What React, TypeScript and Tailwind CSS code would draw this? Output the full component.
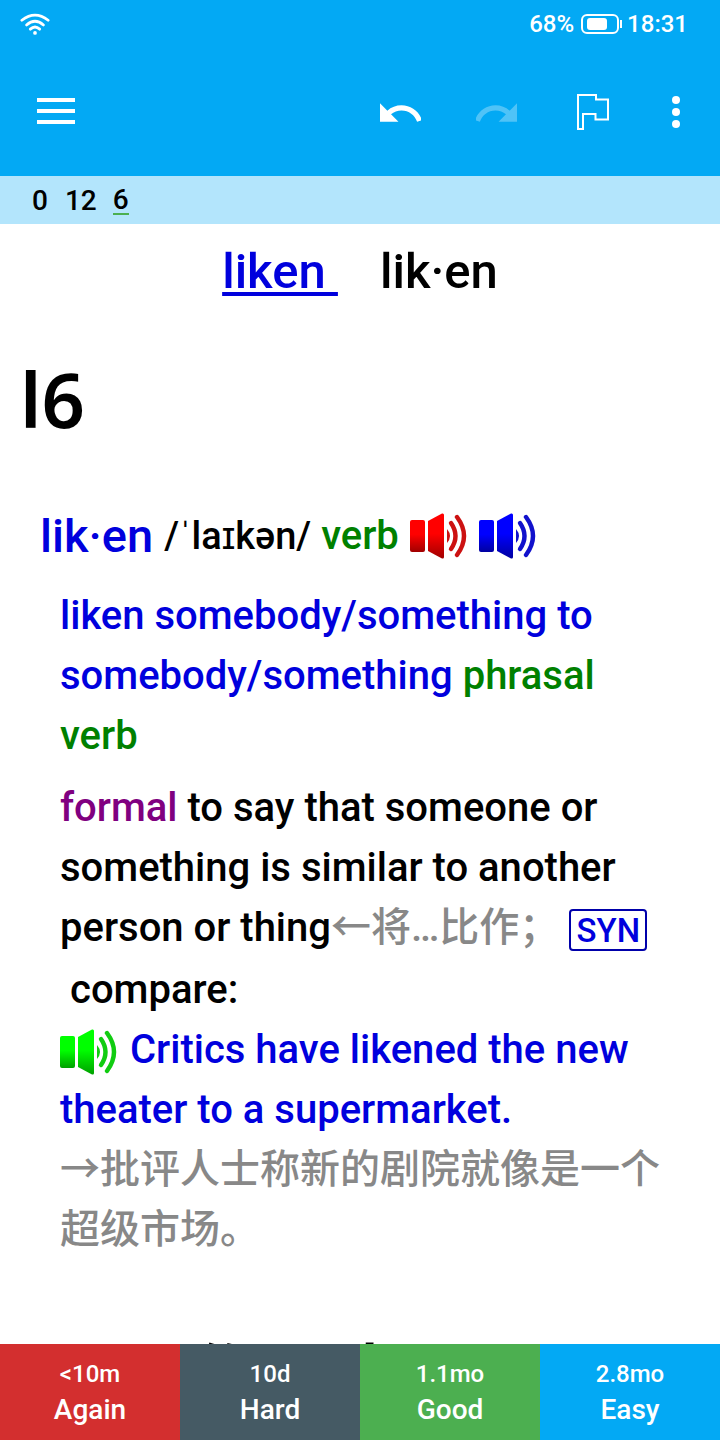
import React from "react";

function Speaker({ light, dark, arc, className }: { light: string; dark: string; arc: string; className?: string }) {
  const id = "g" + light.replace("#", "");
  return (
    <svg viewBox="0 0 58 46" className={className} style={{ filter: "blur(0.7px)" }}>
      <defs>
        <linearGradient id={id} x1="0" y1="0" x2="0" y2="1">
          <stop offset="0" stopColor={light} />
          <stop offset="0.45" stopColor={light} />
          <stop offset="1" stopColor={dark} />
        </linearGradient>
      </defs>
      <rect x="0" y="7" width="15" height="32" rx="2" fill={`url(#${id})`} />
      <path d="M18 8 L32 0.5 Q34 0 34 2 V44 Q34 46 32 45.5 L18 38 Z" fill={`url(#${id})`} />
      <path d="M37 16 Q43 23 37 30 Z" fill={arc} />
      <path d="M41 10 Q50 23 41 36" fill="none" stroke={arc} strokeWidth="4.4" strokeLinecap="round" />
      <path d="M47 4 Q61 23 47 42" fill="none" stroke={arc} strokeWidth="4.4" strokeLinecap="round" />
    </svg>
  );
}

function Btn({ top, label, bg }: { top: string; label: string; bg: string }) {
  return (
    <div className={`flex-1 flex flex-col items-center justify-center pt-[3px] text-white font-medium ${bg}`}>
      <div className="text-[24px] leading-[32px]">{top}</div>
      <div className="text-[28px] leading-[40px]">{label}</div>
    </div>
  );
}

export default function App() {
  return (
    <div className="w-[720px] h-[1440px] flex flex-col overflow-hidden bg-white font-['Roboto','Noto_Sans_CJK_SC',sans-serif] text-black">
      <div className="h-[176px] bg-[#03a9f4] flex flex-col text-white shrink-0">
        <div className="h-[48px] flex items-center justify-between pl-[20px] pr-[32px]">
          <svg viewBox="0 0 32 24" className="w-[30px] h-[24px]" fill="none" stroke="#ffffff" strokeWidth="3" strokeLinecap="round">
            <path d="M2 8 Q16 -3 30 8" />
            <path d="M7 13 Q16 5 25 13" />
            <path d="M11 17.5 Q16 13 21 17.5" />
            <circle cx="16" cy="21.5" r="2" fill="#ffffff" stroke="none" />
          </svg>
          <div className="flex items-center text-[24px] font-medium">
            <span>68%</span>
            <span className="relative ml-[7px] mr-[8px] w-[38px] h-[20px] border-2 border-white rounded-[6px] flex items-center pl-[4px]">
              <span className="w-[20px] h-[12px] bg-white rounded-[3px]" />
              <span className="absolute right-[-5px] top-[4px] w-[2px] h-[8px] bg-white" />
            </span>
            <span>18:31</span>
          </div>
        </div>
        <div className="flex-1 flex items-center pl-[37px] pr-[40px]">
          <div className="w-[38px] -mt-[2px] flex flex-col gap-[7px]">
            <div className="h-[4px] bg-white" />
            <div className="h-[4px] bg-white" />
            <div className="h-[4px] bg-white" />
          </div>
          <div className="flex-1" />
          <svg viewBox="2 7 20 9" className="w-[41px] h-[19px] mr-[55px]">
            <path d="M12.5 8c-2.65 0-5.05.99-6.9 2.6L2 7v9h9l-3.62-3.62c1.39-1.16 3.16-1.88 5.12-1.88 3.54 0 6.55 2.31 7.6 5.5l2.37-.78C21.08 11.03 17.15 8 12.5 8z" fill="#ffffff" />
          </svg>
          <svg viewBox="2 7 20 9" className="w-[41px] h-[19px] mr-[60px]">
            <path d="M18.4 10.6C16.55 8.99 14.15 8 11.5 8c-4.65 0-8.58 3.03-9.96 7.22L3.9 16c1.05-3.19 4.05-5.5 7.6-5.5 1.95 0 3.73.72 5.12 1.88L13 16h9V7l-3.6 3.6z" fill="#ffffff" fillOpacity="0.3" />
          </svg>
          <svg viewBox="0 0 32 36" className="w-[32px] h-[36px] mr-[63px]" fill="none" stroke="#ffffff" strokeWidth="2">
            <path d="M1 35 V1 H19 V5.5 H31 V25.5 H18.5 V20 H6 V35 Z" />
          </svg>
          <div className="flex flex-col gap-[4px]">
            <div className="w-[8px] h-[8px] bg-white rounded-full" />
            <div className="w-[8px] h-[8px] bg-white rounded-full" />
            <div className="w-[8px] h-[8px] bg-white rounded-full" />
          </div>
        </div>
      </div>
      <div className="h-[48px] bg-[#b3e5fc] flex items-center pl-[32px] pt-[1px] text-[28px] font-medium shrink-0">
        <span>0</span>
        <span className="ml-[17px]">12</span>
        <span className="ml-[16px] leading-[27px] border-b-2 border-[#4caf50]">6</span>
      </div>
      <div className="flex-1 overflow-hidden min-h-0">
        <div className="h-[96px] flex items-center justify-center gap-[42px] text-[49px] font-[480]">
          <span className="text-[#0000dd] underline decoration-[4px] underline-offset-[4px] whitespace-pre">liken </span>
          <span>lik·en</span>
        </div>
        <div className="pl-[20px] mt-[24px] h-[110px] text-[76px] leading-[110px] font-['Noto_Sans'] font-semibold">l6</div>
        <div className="pl-[40px] mt-[50px] h-[64px] flex items-center text-[40px] font-[480] whitespace-pre">
          <span className="text-[47px] text-[#0000dd]">lik·en</span>
          <span className="ml-[11px] text-[38px]">/ˈlaɪkən/</span>
          <span className="ml-[10px] text-[#008000]">verb</span>
          <Speaker light="#ff0000" dark="#a00000" arc="#cc1111" className="ml-[11px] w-[58px] h-[46px]" />
          <Speaker light="#0000ff" dark="#0000a0" arc="#1111cc" className="ml-[11px] w-[58px] h-[46px]" />
        </div>
        <div className="pl-[60px] pr-[56px] mt-[18px] text-[40px] leading-[60px] font-[480]">
          <div>
            <span className="text-[#0000dd]">liken somebody/something to somebody/something</span>{" "}
            <span className="text-[#008000]">phrasal verb</span>
          </div>
          <div className="mt-[12px]">
            <span className="text-[#800080]">formal</span> to say that someone or something is similar to another person or thing
            <span className="text-[#888888] font-medium">←将…比作；</span>
            <span className="inline-block ml-[10px] w-[78px] h-[42px] leading-[40px] text-center border-2 border-[#0000aa] rounded-[4px] text-[#0000dd] text-[33px] align-middle font-medium">SYN</span>
          </div>
          <div className="pl-[10px] mt-[2px]">compare:</div>
          <div>
            <Speaker light="#00ff00" dark="#00a000" arc="#11cc11" className="inline-block w-[58px] h-[46px] align-middle mr-[12px]" />
            <span className="text-[#0000dd]">Critics have likened the new theater to a supermarket.</span>
          </div>
          <div className="text-[#888888] font-medium">→批评人士称新的剧院就像是一个超级市场。</div>
        </div>
        <div className="pl-[118px] mt-[67px] text-[72px] leading-[90px] font-['Noto_Sans_CJK_SC'] font-medium whitespace-nowrap">一作下人</div>
      </div>
      <div className="h-[96px] flex shrink-0">
        <Btn top="<10m" label="Again" bg="bg-[#d32f2f]" />
        <Btn top="10d" label="Hard" bg="bg-[#455a64]" />
        <Btn top="1.1mo" label="Good" bg="bg-[#4caf50]" />
        <Btn top="2.8mo" label="Easy" bg="bg-[#03a9f4]" />
      </div>
    </div>
  );
}
